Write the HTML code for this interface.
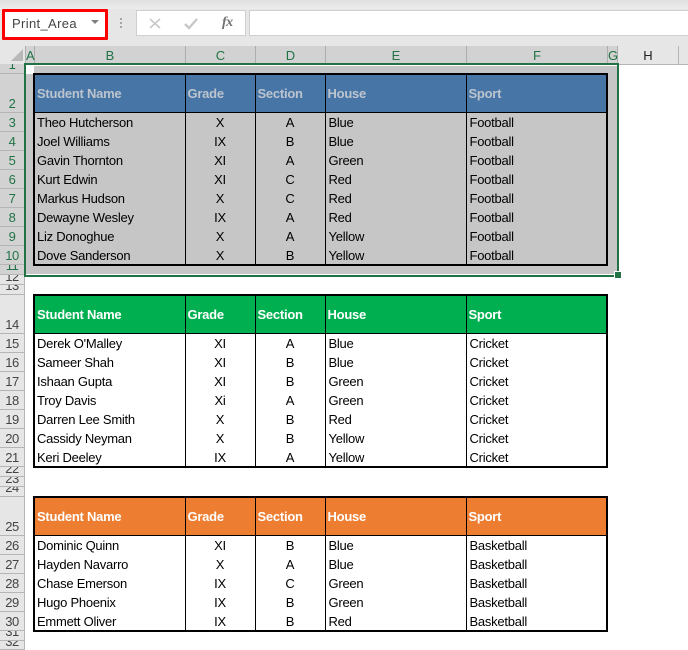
<!DOCTYPE html>
<html><head><meta charset="utf-8"><style>
html,body{margin:0;padding:0;background:#fff}
#p{position:relative;width:688px;height:650px;overflow:hidden;background:#fff;font-family:"Liberation Sans",sans-serif;color:#000}
#p div{position:absolute;box-sizing:border-box}
.ch{top:46px;height:18px;line-height:20px;text-align:center;font-size:13px;color:#217346;background:#d2d2d2;border-right:1px solid #adadad}
.rh{left:0;width:24px;text-align:center;font-size:13px;letter-spacing:-.5px;color:#444;background:#e6e6e6;border-bottom:1px solid #b5b5b5;overflow:hidden}
.rs{background:#d2d2d2;color:#217346}
.t{left:33px;width:575px;border:2px solid #000;overflow:hidden}
table{border-collapse:collapse;table-layout:fixed;width:571px;font-size:13px;letter-spacing:-.25px}
th{height:37px;padding:0 0 0 2px;text-align:left;font-weight:bold;color:#fff;border-right:1px solid #000;border-bottom:1px solid #000;white-space:nowrap}
td{height:19px;padding:0 0 0 3px;border-right:1px solid #000;white-space:nowrap;overflow:hidden}
td:first-child{padding-left:2px}
th:last-child,td:last-child{border-right:0}
td.c{text-align:center;padding:0}
.g td{background:#c6c6c6}
.g th{background:#4775a6;color:#bcc4ce}
.gr th{background:#00b050}
.or th{background:#ed7d31}
</style></head><body><div id="p">
<div style="left:0;top:0;width:688px;height:46px;background:#e6e6e6"></div>
<div style="left:0;top:0;width:688px;height:9px;background:linear-gradient(#e0e0e0,#ececec)"></div>
<div style="left:2px;top:9px;width:106px;height:31px;border:3px solid #f00;background:#fff;border-radius:1px"></div>
<div style="left:12px;top:16px;font-size:13px;line-height:16px;color:#444;letter-spacing:.35px">Print_Area</div>
<div style="left:91px;top:20px;width:0;height:0;border-left:4px solid transparent;border-right:4px solid transparent;border-top:4px solid #808080"></div>
<div style="left:120px;top:18px;width:2px;height:2px;background:#a6a6a6"></div>
<div style="left:120px;top:22px;width:2px;height:2px;background:#a6a6a6"></div>
<div style="left:120px;top:26px;width:2px;height:2px;background:#a6a6a6"></div>
<div style="left:136px;top:10px;width:110px;height:26px;background:#fff;border:1px solid #cfcfcf"></div>
<div style="left:249px;top:10px;width:439px;height:26px;background:#fff;border:1px solid #cfcfcf;border-right:0"></div>
<svg style="position:absolute;left:145px;top:15px" width="90" height="16" viewBox="0 0 90 16"><path d="M5 4L15 13M15 4L5 13" stroke="#c8c8c8" stroke-width="1.6" fill="none"/><path d="M40 9L44 13L52 4" stroke="#c8c8c8" stroke-width="2.4" fill="none"/></svg>
<div style="left:222px;top:14px;font:italic bold 14px/17px 'Liberation Serif',serif;color:#707070;letter-spacing:-.5px">fx</div>

<div style="left:0;top:46px;width:688px;height:18px;background:#e6e6e6"></div>
<div style="left:11px;top:49px;width:0;height:0;border-left:12px solid transparent;border-bottom:12px solid #b8b8b8"></div>
<div class="ch" style="left:25px;width:10px;border-left:1px solid #adadad">A</div>
<div class="ch" style="left:35px;width:151px">B</div>
<div class="ch" style="left:186px;width:70px">C</div>
<div class="ch" style="left:256px;width:70px">D</div>
<div class="ch" style="left:326px;width:141px">E</div>
<div class="ch" style="left:467px;width:141px">F</div>
<div class="ch" style="left:608px;width:10px">G</div>
<div class="ch" style="left:618px;width:61px;background:#e6e6e6;color:#222;border-right:1px solid #b5b5b5">H</div>
<div style="left:0;top:64px;width:688px;height:1px;background:#b5b5b5"></div>

<div style="left:24px;top:64px;width:1px;height:586px;background:#b5b5b5"></div>
<div class="rh rs" style="top:64px;height:10px;line-height:2px">1</div>
<div class="rh rs" style="top:74px;height:39px;line-height:59px">2</div>
<div class="rh rs" style="top:113px;height:19px;line-height:19px">3</div>
<div class="rh rs" style="top:132px;height:19px;line-height:19px">4</div>
<div class="rh rs" style="top:151px;height:19px;line-height:19px">5</div>
<div class="rh rs" style="top:170px;height:19px;line-height:19px">6</div>
<div class="rh rs" style="top:189px;height:19px;line-height:19px">7</div>
<div class="rh rs" style="top:208px;height:19px;line-height:19px">8</div>
<div class="rh rs" style="top:227px;height:19px;line-height:19px">9</div>
<div class="rh rs" style="top:246px;height:19px;line-height:19px">10</div>
<div class="rh rs" style="top:265px;height:10px;line-height:2px">11</div>
<div class="rh" style="top:275px;height:10px;line-height:4px">12</div>
<div class="rh" style="top:285px;height:10px;line-height:2px">13</div>
<div class="rh" style="top:295px;height:39px;line-height:59px">14</div>
<div class="rh" style="top:334px;height:19px;line-height:19px">15</div>
<div class="rh" style="top:353px;height:19px;line-height:19px">16</div>
<div class="rh" style="top:372px;height:19px;line-height:19px">17</div>
<div class="rh" style="top:391px;height:19px;line-height:19px">18</div>
<div class="rh" style="top:410px;height:19px;line-height:19px">19</div>
<div class="rh" style="top:429px;height:19px;line-height:19px">20</div>
<div class="rh" style="top:448px;height:19px;line-height:19px">21</div>
<div class="rh" style="top:467px;height:10px;line-height:4px">22</div>
<div class="rh" style="top:477px;height:10px;line-height:4px">23</div>
<div class="rh" style="top:487px;height:10px;line-height:2px">24</div>
<div class="rh" style="top:497px;height:39px;line-height:59px">25</div>
<div class="rh" style="top:536px;height:19px;line-height:19px">26</div>
<div class="rh" style="top:555px;height:19px;line-height:19px">27</div>
<div class="rh" style="top:574px;height:19px;line-height:19px">28</div>
<div class="rh" style="top:593px;height:19px;line-height:19px">29</div>
<div class="rh" style="top:612px;height:19px;line-height:19px">30</div>
<div class="rh" style="top:631px;height:10px;line-height:2px">31</div>
<div class="rh" style="top:641px;height:9px;line-height:2px">32</div>

<div style="left:26px;top:66px;width:591px;height:209px;background:#c6c6c6"></div>
<div style="left:26px;top:66px;width:8px;height:8px;background:#fff"></div>
<div style="left:26px;top:274px;width:591px;height:1px;background:#fff"></div>

<div class="t g" style="top:73px;height:193px"><table><colgroup><col style="width:150px"><col style="width:70px"><col style="width:70px"><col style="width:141px"><col></colgroup>
<tr><th>Student Name</th><th>Grade</th><th>Section</th><th>House</th><th>Sport</th></tr>
<tr><td>Theo Hutcherson</td><td class="c">X</td><td class="c">A</td><td>Blue</td><td>Football</td></tr>
<tr><td>Joel Williams</td><td class="c">IX</td><td class="c">B</td><td>Blue</td><td>Football</td></tr>
<tr><td>Gavin Thornton</td><td class="c">XI</td><td class="c">A</td><td>Green</td><td>Football</td></tr>
<tr><td>Kurt Edwin</td><td class="c">XI</td><td class="c">C</td><td>Red</td><td>Football</td></tr>
<tr><td>Markus Hudson</td><td class="c">X</td><td class="c">C</td><td>Red</td><td>Football</td></tr>
<tr><td>Dewayne Wesley</td><td class="c">IX</td><td class="c">A</td><td>Red</td><td>Football</td></tr>
<tr><td>Liz Donoghue</td><td class="c">X</td><td class="c">A</td><td>Yellow</td><td>Football</td></tr>
<tr><td>Dove Sanderson</td><td class="c">X</td><td class="c">B</td><td>Yellow</td><td>Football</td></tr>
</table></div>

<div class="t gr" style="top:294px;height:174px"><table><colgroup><col style="width:150px"><col style="width:70px"><col style="width:70px"><col style="width:141px"><col></colgroup>
<tr><th>Student Name</th><th>Grade</th><th>Section</th><th>House</th><th>Sport</th></tr>
<tr><td>Derek O'Malley</td><td class="c">XI</td><td class="c">A</td><td>Blue</td><td>Cricket</td></tr>
<tr><td>Sameer Shah</td><td class="c">XI</td><td class="c">B</td><td>Blue</td><td>Cricket</td></tr>
<tr><td>Ishaan Gupta</td><td class="c">XI</td><td class="c">B</td><td>Green</td><td>Cricket</td></tr>
<tr><td>Troy Davis</td><td class="c">Xi</td><td class="c">A</td><td>Green</td><td>Cricket</td></tr>
<tr><td>Darren Lee Smith</td><td class="c">X</td><td class="c">B</td><td>Red</td><td>Cricket</td></tr>
<tr><td>Cassidy Neyman</td><td class="c">X</td><td class="c">B</td><td>Yellow</td><td>Cricket</td></tr>
<tr><td>Keri Deeley</td><td class="c">IX</td><td class="c">A</td><td>Yellow</td><td>Cricket</td></tr>
</table></div>

<div class="t or" style="top:496px;height:136px"><table><colgroup><col style="width:150px"><col style="width:70px"><col style="width:70px"><col style="width:141px"><col></colgroup>
<tr><th>Student Name</th><th>Grade</th><th>Section</th><th>House</th><th>Sport</th></tr>
<tr><td>Dominic Quinn</td><td class="c">XI</td><td class="c">B</td><td>Blue</td><td>Basketball</td></tr>
<tr><td>Hayden Navarro</td><td class="c">X</td><td class="c">A</td><td>Blue</td><td>Basketball</td></tr>
<tr><td>Chase Emerson</td><td class="c">IX</td><td class="c">C</td><td>Green</td><td>Basketball</td></tr>
<tr><td>Hugo Phoenix</td><td class="c">IX</td><td class="c">B</td><td>Green</td><td>Basketball</td></tr>
<tr><td>Emmett Oliver</td><td class="c">IX</td><td class="c">B</td><td>Red</td><td>Basketball</td></tr>
</table></div>

<div style="left:24px;top:63px;width:595px;height:214px;border:2px solid #217346"></div>
<div style="left:615px;top:272px;width:6px;height:6px;background:#217346;outline:1px solid #fff"></div>
</div></body></html>
